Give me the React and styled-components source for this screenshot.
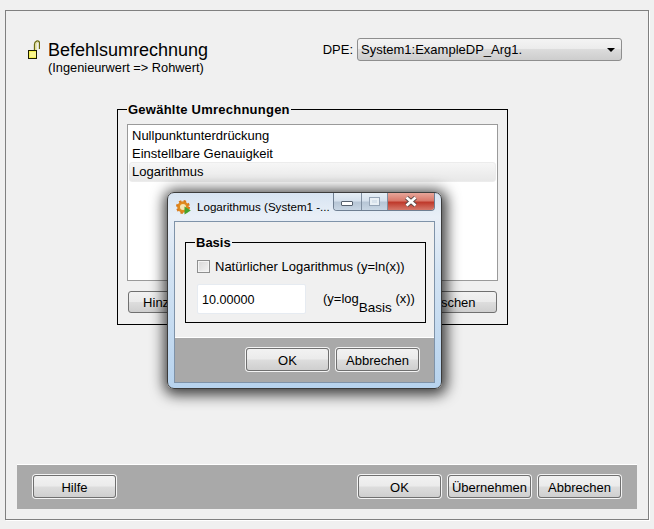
import React from 'react'
import styled, { createGlobalStyle } from 'styled-components'

const GlobalStyle = createGlobalStyle`
  html, body {
    margin: 0;
    padding: 0;
    background: #f0f0f0;
  }
  * {
    box-sizing: border-box;
  }
`

const Page = styled.div`
  position: relative;
  width: 654px;
  height: 529px;
  padding: 10px 5px;
  background: #f0f0f0;
  color: #000;
  font-family: 'Liberation Sans', Arial, sans-serif;
  font-size: 13px;
  overflow: hidden;
`

const Frame = styled.div`
  display: flex;
  flex-direction: column;
  height: 510px;
  width: 644px;
  border: 1px solid #808080;
  box-shadow: 1px 1px 0 #fff;
`

const Header = styled.div`
  display: flex;
  justify-content: space-between;
  height: 91px;
  padding: 28px 26px 0 22px;
`

const TitleBlock = styled.div`
  display: flex;
  gap: 8px;
`

const LockSvg = styled.svg`
  flex: none;
  margin-top: 1px;
`

const TitleText = styled.div`
  padding-top: 1px;
`

const Title = styled.div`
  font-size: 18px;
  line-height: 21px;
`

const Subtitle = styled.div`
  font-size: 12.8px;
  line-height: 13px;
`

const DpeRow = styled.div`
  display: flex;
  gap: 4px;
  height: 23px;
  align-items: center;
  font-size: 13px;
  margin-top: -1px;
`

const DpeSelect = styled.div`
  display: flex;
  align-items: center;
  justify-content: space-between;
  width: 265px;
  height: 23px;
  padding: 0 6px 0 3px;
  border: 1px solid #8e8e8e;
  border-radius: 3px;
  font-size: 13px;
  background: linear-gradient(#f4f4f4 0%, #ececec 45%, #dcdcdc 50%, #cdcdcd 100%);
`

const Arrow = styled.span`
  width: 0;
  height: 0;
  border-left: 4px solid transparent;
  border-right: 4px solid transparent;
  border-top: 4px solid #000;
`

const Group = styled.fieldset`
  display: flex;
  flex-direction: column;
  width: 391px;
  height: 223px;
  margin: 0 0 0 111px;
  padding: 7px 9px 0;
  border: 1px solid #000;
  min-width: 0;
`

const Legend = styled.legend`
  padding: 0 1px;
  font-size: 13px;
  line-height: 15px;
  font-weight: 700;
`

const GroupLegend = styled(Legend)`
  letter-spacing: 0.24px;
`

const List = styled.div`
  height: 157px;
  padding: 1px;
  background: #fff;
  border: 1px solid #9a9a9a;
`

const ListItem = styled.div`
  height: 18px;
  padding: 2px 3px;
  font-size: 13px;
  line-height: 15px;
  ${({ $selected }) =>
    $selected &&
    `
    height: 20px;
    padding: 1px 2px;
    border: 1px solid #ececec;
    border-radius: 3px;
    background: linear-gradient(#f6f6f6, #e8e8e8);
  `}
`

const GroupButtons = styled.div`
  display: flex;
  justify-content: space-between;
  margin-top: 9px;
`

const Button = styled.button`
  display: block;
  width: ${({ $width }) => $width || 83}px;
  height: ${({ $plain }) => ($plain ? 22 : 23)}px;
  margin: 1px;
  padding: ${({ $plain }) => ($plain ? 0 : '2px 0 0')};
  border: 1px solid #707070;
  border-radius: 3px;
  box-shadow: 0 0 0 1px ${({ $plain }) => ($plain ? 'transparent' : '#f4f4f4')};
  font-family: inherit;
  font-size: 13px;
  color: #000;
  background: linear-gradient(#f2f2f2 0%, #ebebeb 48%, #dddddd 52%, #cfcfcf 100%);
`

const Bar = styled.div`
  display: flex;
  gap: 5px;
  height: 44px;
  padding: 9px 15px 0;
  background: #a9a9a9;
  box-shadow: 0 -1px 0 #fff;
`

const BottomBar = styled(Bar)`
  margin: auto 11px 10px 11px;
`

const Spacer = styled.div`
  flex: 1;
`

const Dialog = styled.div`
  position: absolute;
  left: 167px;
  top: 192px;
  display: flex;
  flex-direction: column;
  width: 275px;
  height: 197px;
  padding: 0 6px 5px;
  border: 1px solid #3c3c3c;
  border-radius: 7px;
  background: linear-gradient(#d7e4f2 0%, #e9eff7 12%, #d3e3f3 40%, #b7d3ee 100%);
  box-shadow: 1px 2px 14px 4px rgba(0, 0, 0, 0.75);
`

const DialogTitleBar = styled.div`
  display: flex;
  align-items: flex-start;
  height: 28px;
`

const GearIcon = styled.svg`
  flex: none;
  margin: 7px 6px 0 2px;
`

const DialogTitle = styled.div`
  width: 137px;
  padding-top: 6px;
  font-size: 11.6px;
  line-height: 15px;
  white-space: nowrap;
`

const Controls = styled.div`
  display: flex;
  height: 18px;
  border: 1px solid #6f7f92;
  border-top: none;
  border-radius: 0 0 4px 4px;
  overflow: hidden;
`

const ControlButton = styled.div`
  display: flex;
  align-items: center;
  justify-content: center;
  width: ${({ $width }) => $width}px;
  border-left: ${({ $first }) => ($first ? 'none' : '1px solid #7f8ea0')};
  background: ${({ $close }) =>
    $close
      ? 'linear-gradient(#e7a69a 0%, #d9796b 45%, #bf3a2c 55%, #d5786a 100%)'
      : 'linear-gradient(#e6eef6 0%, #d6e1ed 45%, #b7c6d6 55%, #c8d6e4 100%)'};
`

const MinGlyph = styled.span`
  width: 12px;
  height: 5px;
  margin-top: 3px;
  background: #fff;
  border: 1px solid #55606e;
  border-radius: 1px;
`

const MaxGlyph = styled.span`
  width: 11px;
  height: 9px;
  border: 1px solid #95a4b6;
  background: #d8e2ec;
  box-shadow: inset 0 0 0 2px #e9eff5;
`

const DialogClient = styled.div`
  display: flex;
  flex-direction: column;
  flex: 1;
  border: 1px solid #7f93a9;
  background: #f0f0f0;
`

const DialogBody = styled.div`
  flex: 1;
  padding: 13px 8px 0 10px;
`

const BasisGroup = styled.fieldset`
  width: 241px;
  height: 88px;
  margin: 0;
  padding: 9px 9px 0;
  border: 1px solid #000;
  min-width: 0;
`

const CheckRow = styled.div`
  display: flex;
  align-items: center;
  gap: 5px;
  height: 14px;
  margin-left: 2px;
  font-size: 13px;
`

const CheckBox = styled.span`
  width: 13px;
  height: 13px;
  border: 1px solid #8e8f8f;
  background: linear-gradient(135deg, #d8d8d8, #f4f4f4);
  box-shadow: inset 0 0 0 1px #f4f4f4;
`

const InputRow = styled.div`
  display: flex;
  gap: 17px;
  margin: 11px 0 0 2px;
`

const ValueInput = styled.div`
  width: 109px;
  height: 30px;
  padding: 0 4px;
  line-height: 30px;
  font-size: 12.6px;
  background: #fff;
  border: 1px solid #e6ebf1;
  border-radius: 2px;
`

const Formula = styled.div`
  padding-top: 7px;
  font-size: 13px;
  line-height: 15px;
  white-space: nowrap;
  sub {
    font-size: 13.5px;
    line-height: 0;
    vertical-align: -9px;
  }
`

const DialogBar = styled(Bar)`
  padding-right: 14px;
`

const LockIcon = () => (
  <LockSvg width="12" height="19" viewBox="0 0 12 19">
    <path d="M6.5 11V4.5C6.5 1 10.5 -0.5 11.5 2.5V9" fill="none" stroke="#6b6b10" strokeWidth="1.3" />
    <path d="M8 11V4.5C8 2.5 9.5 1.8 10 3" fill="none" stroke="#e0dc70" strokeWidth="1" />
    <rect x="0.5" y="10.5" width="8" height="8" fill="#f3ee4e" stroke="#1c1c00" />
    <rect x="2" y="12" width="6" height="5" fill="#fbf78e" />
  </LockSvg>
)

const GearGlyph = () => (
  <GearIcon width="15" height="15" viewBox="0 0 15 15">
    <circle cx="7" cy="7" r="4.4" fill="#f6e6b4" stroke="#e08a1e" strokeWidth="2.8" />
    <circle cx="7" cy="7" r="6" fill="none" stroke="#d8791a" strokeWidth="2" strokeDasharray="2.4 2.3" />
    <path d="M8.5 6.5V14.5L14.8 10.5Z" fill="#46a32c" />
  </GearIcon>
)

const CloseGlyph = () => (
  <svg width="16" height="11" viewBox="0 0 16 11">
    <path d="M3.5 1.5L12.5 9.5M12.5 1.5L3.5 9.5" stroke="#5b4a48" strokeWidth="4.4" />
    <path d="M3.5 1.5L12.5 9.5M12.5 1.5L3.5 9.5" stroke="#fff" strokeWidth="2.6" />
  </svg>
)

const conversions = [
  'Nullpunktunterdrückung',
  'Einstellbare Genauigkeit',
  'Logarithmus',
]

export default function App() {
  return (
    <Page>
      <GlobalStyle />
      <Frame>
        <Header>
          <TitleBlock>
            <LockIcon />
            <TitleText>
              <Title>Befehlsumrechnung</Title>
              <Subtitle>(Ingenieurwert =&gt; Rohwert)</Subtitle>
            </TitleText>
          </TitleBlock>
          <DpeRow>
            <span>DPE:</span>
            <DpeSelect>
              <span>System1:ExampleDP_Arg1.</span>
              <Arrow />
            </DpeSelect>
          </DpeRow>
        </Header>

        <Group>
          <GroupLegend>Gewählte Umrechnungen</GroupLegend>
          <List>
            {conversions.map((name) => (
              <ListItem key={name} $selected={name === 'Logarithmus'}>
                {name}
              </ListItem>
            ))}
          </List>
          <GroupButtons>
            <Button $plain $width={96}>Hinzufügen</Button>
            <Button $plain $width={92}>Löschen</Button>
          </GroupButtons>
        </Group>

        <BottomBar>
          <Button>Hilfe</Button>
          <Spacer />
          <Button>OK</Button>
          <Button>Übernehmen</Button>
          <Button>Abbrechen</Button>
        </BottomBar>
      </Frame>

      <Dialog>
        <DialogTitleBar>
          <GearGlyph />
          <DialogTitle>Logarithmus (System1 -...</DialogTitle>
          <Controls>
            <ControlButton $first $width={27}><MinGlyph /></ControlButton>
            <ControlButton $width={27}><MaxGlyph /></ControlButton>
            <ControlButton $close $width={47}><CloseGlyph /></ControlButton>
          </Controls>
        </DialogTitleBar>
        <DialogClient>
          <DialogBody>
            <BasisGroup>
              <Legend>Basis</Legend>
              <CheckRow>
                <CheckBox />
                <span>Natürlicher Logarithmus (y=ln(x))</span>
              </CheckRow>
              <InputRow>
                <ValueInput>10.00000</ValueInput>
                <Formula>(y=log<sub>Basis</sub> (x))</Formula>
              </InputRow>
            </BasisGroup>
          </DialogBody>
          <DialogBar>
            <Spacer />
            <Button>OK</Button>
            <Button>Abbrechen</Button>
          </DialogBar>
        </DialogClient>
      </Dialog>
    </Page>
  )
}
